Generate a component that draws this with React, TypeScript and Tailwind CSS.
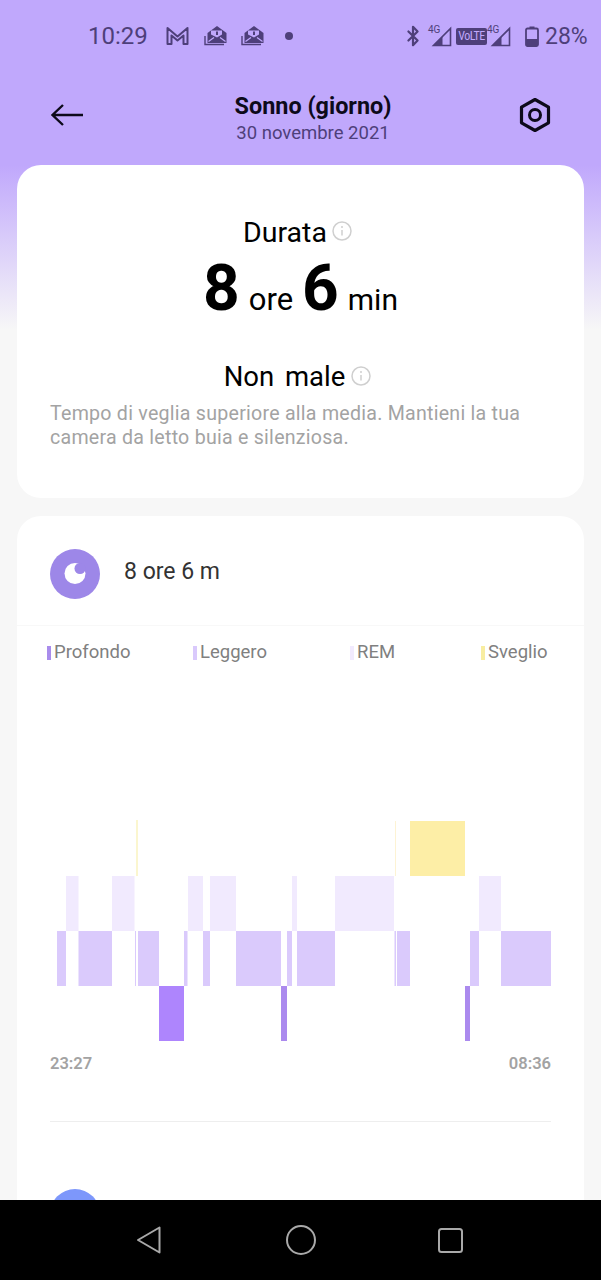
import { Bluetooth } from 'lucide-react';

const deep = [[159, 184], [281, 287], [465, 470]];
const light = [[57, 66], [78.5, 112], [135, 136], [138, 159], [184, 187.5], [203, 210], [236, 281], [287, 292], [297, 335], [394.5, 396], [397, 410], [470, 479], [501, 551]];
const rem = [[66, 78.5], [112, 134.5], [188, 203], [210, 236], [292, 297], [335, 394], [479, 501]];

const legend = [
  { label: 'Profondo', color: 'bg-[#a98cec]', width: 'w-[146px]' },
  { label: 'Leggero', color: 'bg-[#d9c9fc]', width: 'w-[157px]' },
  { label: 'REM', color: 'bg-[#f1eafe]', width: 'w-[131px]' },
  { label: 'Sveglio', color: 'bg-[#f8eda0]', width: 'w-[70px]' },
];

function Signal() {
  return (
    <div className="relative w-[24px] h-[22px]">
      <span className="absolute left-0 top-[-1px] text-[10px] leading-[11px] text-[#4e3f7a] font-['Roboto',sans-serif]">4G</span>
      <svg width="24" height="22" viewBox="0 0 24 22" className="block">
        <path d="M22.5 3.5V20.5H5.5Z" fill="none" stroke="#4e3f7a" strokeWidth="1.6" />
        <path d="M14 12V20.5H5.5Z" fill="#4e3f7a" stroke="#4e3f7a" />
      </svg>
    </div>
  );
}

function Mail() {
  return (
    <svg width="24" height="22" viewBox="0 0 24 22" fill="none">
      <path d="M1 11V19.5H20" stroke="#4e3f7a" strokeWidth="1.4" />
      <path d="M3.5 8L13 1L22.5 8V18H3.5Z" fill="#4e3f7a" />
      <path d="M7 9.5V5.5H18V9.5L13 12.5Z" fill="#c0a8fc" />
      <path d="M12 6.5H14V10H12Z" fill="#4e3f7a" />
      <path d="M4.5 16.5L10 12.5M21.5 16.5L16 12.5" stroke="#c0a8fc" strokeWidth="1.2" />
    </svg>
  );
}

function InfoIcon() {
  return (
    <svg width="20" height="20" viewBox="0 0 20 20" fill="none">
      <circle cx="10" cy="10" r="9" stroke="#cfcfcf" strokeWidth="1.5" />
      <path d="M10 9V14.5" stroke="#cfcfcf" strokeWidth="1.5" />
      <circle cx="10" cy="6" r="1" fill="#cfcfcf" />
    </svg>
  );
}

function StatusBar() {
  return (
    <div className="h-[72px] flex items-center pl-[88px] text-[#4e3f7a]">
      <span className="text-[24px] w-[59px] leading-none">10:29</span>
      <svg width="23" height="20" viewBox="0 0 23 20" fill="none" className="ml-[19px]">
        <path d="M1.5 18V2L11.5 10.5L21.5 2V18H17.5V9.5L11.5 14.5L5.5 9.5V18Z" stroke="#4e3f7a" strokeWidth="2" strokeLinejoin="round" />
      </svg>
      <div className="ml-[15px]"><Mail /></div>
      <div className="ml-[13px]"><Mail /></div>
      <div className="ml-[20px] w-[8px] h-[8px] rounded-full bg-[#4e3f7a]" />
      <Bluetooth size={22} strokeWidth={2.4} className="ml-[109px] text-[#4e3f7a]" />
      <div className="ml-[4px]"><Signal /></div>
      <span className="ml-[4px] w-[31px] h-[17px] rounded-[2px] bg-[#4e3f7a] text-[#c0a8fc] text-[12px] leading-[17px] text-center font-['Roboto_Condensed','Liberation_Sans_Narrow',Roboto,sans-serif] tracking-[-0.5px]">VoLTE</span>
      <div className="ml-0"><Signal /></div>
      <svg width="14" height="21" viewBox="0 0 14 21" fill="none" className="ml-[14px]">
        <path d="M4.5 0.5H9.5V2.5H4.5Z" fill="#4e3f7a" />
        <rect x="1" y="2.5" width="12" height="17.5" rx="1.5" stroke="#4e3f7a" strokeWidth="1.8" />
        <rect x="1" y="13" width="12" height="7" fill="#4e3f7a" />
      </svg>
      <span className="ml-[6px] text-[23px] leading-none">28%</span>
    </div>
  );
}

function Header() {
  return (
    <div className="h-[93px] flex items-center pl-[51px] pb-[8px]">
      <svg width="32" height="24" viewBox="0 0 32 24" fill="none" className="mt-[1px]">
        <path d="M12 2L1.5 12L12 22M2 12H32" stroke="#0d0a1a" strokeWidth="2.4" />
      </svg>
      <div className="w-[200px] ml-[130px] mt-[9px] flex flex-col items-center">
        <span className="text-[23.4px] leading-[26px] font-bold text-[#0d0a1a] whitespace-nowrap">Sonno (giorno)</span>
        <span className="text-[18.5px] leading-[24px] mt-[2px] text-[#4e3f7a] whitespace-nowrap">30 novembre 2021</span>
      </div>
      <svg width="34" height="36" viewBox="0 0 34 36" fill="none" className="ml-[105px] mt-[1px]">
        <path d="M17 2.5L30.5 10.2V25.8L17 33.5L3.5 25.8V10.2Z" stroke="#0d0a1a" strokeWidth="3.2" strokeLinejoin="round" />
        <circle cx="17" cy="18" r="5.5" stroke="#0d0a1a" strokeWidth="3" />
      </svg>
    </div>
  );
}

function SummaryCard() {
  return (
    <div className="h-[333px] rounded-[24px] bg-white flex flex-col items-center pt-[50px]">
      <div className="flex items-start h-[34px] mt-[1px] mr-[6px]">
        <span className="text-[28.5px] leading-[34px] text-black">Durata</span>
        <div className="ml-[5px] mt-[5px]"><InfoIcon /></div>
      </div>
      <div className="flex items-baseline h-[62px] mt-[8px] text-black text-[31px] leading-[62px]">
        <span className="text-[64px] font-bold">8</span>
        <span className="ml-[9px]">ore</span>
        <span className="ml-[9px] text-[64px] font-bold">6</span>
        <span className="ml-[9px] text-[30px]">min</span>
      </div>
      <div className="flex items-start h-[34px] mt-[40px] mr-[6px]">
        <span className="text-[27.5px] leading-[34px] text-black [word-spacing:4px]">Non male</span>
        <div className="ml-[6px] mt-[6px]"><InfoIcon /></div>
      </div>
      <p className="self-stretch pl-[33px] pr-[40px] mt-[8px] text-[19.6px] leading-[24px] text-[#a3a3a3] tracking-[0.25px]">
        Tempo di veglia superiore alla media. Mantieni la tua camera da letto buia e silenziosa.
      </p>
    </div>
  );
}

function SleepChart() {
  return (
    <svg viewBox="17 800 567 250" className="block w-[567px] h-[250px] mt-[136px]">
      <rect x="136.5" y="820" width="1" height="56" fill="#f8eda0" />
      <rect x="395" y="821" width="1" height="55" fill="#fdf3d4" />
      <rect x="410" y="821" width="55" height="55" fill="#fdeea6" />
      {rem.map(([a, b]) => <rect key={a} x={a} y="876" width={b - a} height="55" fill="#f1eafe" />)}
      {light.map(([a, b]) => <rect key={a} x={a} y="931" width={b - a} height="55" fill="#dacafc" />)}
      {deep.map(([a, b], i) => <rect key={a} x={a} y="986" width={b - a} height="55" fill={i === 0 ? '#ae85fd' : '#ab8aee'} />)}
    </svg>
  );
}

function DetailCard() {
  return (
    <div className="h-[700px] mt-[18px] rounded-t-[24px] bg-white">
      <div className="h-[110px] flex items-center pl-[33px] pt-[6px] border-b border-[#f8f8f8]">
        <svg width="50" height="50" viewBox="0 0 50 50">
          <circle cx="25" cy="25" r="25" fill="#9d87e8" />
          <circle cx="25" cy="24.5" r="10.5" fill="#fff" />
          <circle cx="30" cy="19.5" r="5.5" fill="#9d87e8" />
        </svg>
        <span className="ml-[24px] mb-[2px] text-[23px] text-[#333333]">8 ore 6 m</span>
      </div>
      <div className="flex pl-[30px] mt-[16px] h-[22px] items-center text-[18.5px] text-[#808080]">
        {legend.map((l) => (
          <div key={l.label} className={`flex items-center ${l.width}`}>
            <span className={`w-[4px] h-[14px] mr-[3px] ${l.color}`} />
            <span>{l.label}</span>
          </div>
        ))}
      </div>
      <SleepChart />
      <div className="flex justify-between px-[33px] mt-[4px] text-[16.5px] leading-[20px] font-semibold text-[#a3a3a3]">
        <span>23:27</span>
        <span>08:36</span>
      </div>
      <div className="mx-[33px] mt-[47px] border-t border-[#eeeeee]" />
      <div className="ml-[33px] mt-[67px] w-[50px] h-[50px] rounded-full bg-[#7d97fb]" />
    </div>
  );
}

function NavBar() {
  return (
    <div className="h-[80px] shrink-0 bg-black flex items-center pl-[136px] pb-[1px]">
      <svg width="26" height="30" viewBox="0 0 26 30" fill="none">
        <path d="M23.5 2.5V27.5L2 15Z" stroke="#a9a9a9" strokeWidth="2" strokeLinejoin="round" />
      </svg>
      <svg width="30" height="30" viewBox="0 0 30 30" fill="none" className="ml-[124px]">
        <circle cx="15" cy="15" r="14" stroke="#a9a9a9" strokeWidth="2" />
      </svg>
      <svg width="26" height="26" viewBox="0 0 26 26" fill="none" className="ml-[121px]">
        <rect x="2" y="2" width="23" height="23" rx="2.5" stroke="#a9a9a9" strokeWidth="2" />
      </svg>
    </div>
  );
}

export default function App() {
  return (
    <div className="w-[601px] h-[1280px] flex flex-col overflow-hidden font-['Roboto',sans-serif]">
      <div className="flex-1 min-h-0 overflow-hidden bg-[linear-gradient(#c0a8fc_0,#c0a8fc_165px,#f7f7f7_330px)]">
        <StatusBar />
        <Header />
        <div className="mx-[17px]">
          <SummaryCard />
          <DetailCard />
        </div>
      </div>
      <NavBar />
    </div>
  );
}
